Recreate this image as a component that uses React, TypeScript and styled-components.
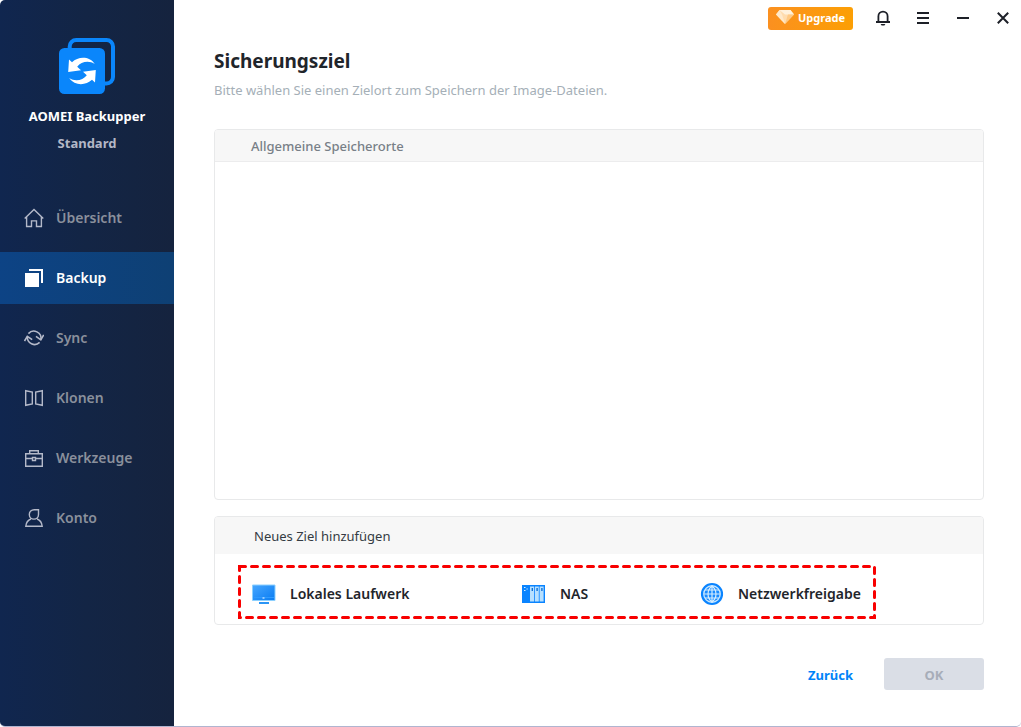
import React from 'react';
import styled, { createGlobalStyle } from 'styled-components';

const GlobalStyle = createGlobalStyle`
  *, *::before, *::after { box-sizing: border-box; }
  body {
    margin: 0;
    background: #ffffff;
    color: #1f252b;
    font-family: 'Noto Sans', 'Open Sans', sans-serif;
    font-size: 13px;
    line-height: 20px;
  }
  button {
    margin: 0;
    padding: 0;
    border: 0;
    background: none;
    color: inherit;
    font: inherit;
    cursor: pointer;
  }
  h1, h2, p, ul { margin: 0; padding: 0; }
  svg { display: block; flex: none; }
`;

const Window = styled.div`
  display: grid;
  grid-template-columns: 174px minmax(0, 1fr);
  min-height: 100vh;
  overflow: hidden;
  border-bottom: 1px solid #b0b5d0;
  border-radius: 5px;
`;

const Sidebar = styled.aside`
  display: flex;
  flex-direction: column;
  background: linear-gradient(90deg, #10264f, #132545 50%, #15233e);
`;

const Brand = styled.div`
  display: flex;
  flex-direction: column;
  align-items: center;
  padding-top: 38px;
`;

const ProductName = styled.strong`
  margin-top: 12px;
  color: #ffffff;
  font-weight: 700;
`;

const Edition = styled.span`
  margin-top: 7px;
  color: #b3b7c6;
  font-weight: 700;
`;

const NavList = styled.ul`
  display: flex;
  flex-direction: column;
  gap: 8px;
  margin-top: 39px;
  list-style: none;
`;

const NavLink = styled.a<{ $active?: boolean }>`
  display: flex;
  align-items: center;
  gap: 12px;
  height: 52px;
  padding-left: 24px;
  background: ${(p) => (p.$active ? 'linear-gradient(90deg, #0d4385, #0e4074)' : 'transparent')};
  color: ${(p) => (p.$active ? '#ffffff' : '#8a909c')};
  font-size: 14px;
  font-weight: 600;
  text-decoration: none;

  svg { color: ${(p) => (p.$active ? '#ffffff' : '#b4b9c9')}; }
`;

const Main = styled.main`
  display: flex;
  flex-direction: column;
`;

const TitleBar = styled.header`
  display: flex;
  align-items: center;
  justify-content: flex-end;
  gap: 16px;
  height: 36px;
  padding-right: 6px;
`;

const UpgradeButton = styled.button`
  display: flex;
  align-items: center;
  gap: 4px;
  height: 23px;
  margin-right: 2px;
  padding: 0 8px;
  border-radius: 3px;
  background: linear-gradient(90deg, #fb9020, #fc9f04);
  color: #ffffff;
  font-size: 11px;
  font-weight: 700;
`;

const WindowButton = styled.button`
  display: flex;
  align-items: center;
  justify-content: center;
  width: 24px;
  height: 24px;
  color: #1d2028;
`;

const Content = styled.div`
  display: flex;
  flex: 1;
  flex-direction: column;
  padding: 12px 37px 36px 40px;
`;

const Title = styled.h1`
  font-size: 19px;
  font-weight: 700;
  line-height: 26px;
`;

const Subtitle = styled.p`
  margin-top: 6px;
  color: #a5afb7;
`;

const Panel = styled.section<{ $grow?: boolean }>`
  flex: ${(p) => (p.$grow ? '1' : 'none')};
  border: 1px solid #e8e9ea;
  border-radius: 4px;
  overflow: hidden;
`;

const LocationsPanel = styled(Panel)`
  margin-top: 29px;
`;

const TargetPanel = styled(Panel)`
  margin-top: 16px;
`;

const LocationsHeading = styled.h2`
  padding: 6px 36px 5px;
  border-bottom: 1px solid #ececed;
  background: #f7f7f7;
  color: #788087;
  font-size: 13px;
  font-weight: 500;
`;

const TargetHeading = styled.h2`
  padding: 9px 39px 8px;
  background: #f7f7f7;
  color: #343b43;
  font-size: 13px;
  font-weight: 400;
`;

const Highlight = styled.div`
  position: relative;
  display: grid;
  grid-template-columns: 270px 178px 162px;
  align-items: center;
  width: fit-content;
  height: 54px;
  margin: 11px 23px 5px;
  padding: 3px 14px 0;
`;

const HighlightOutline = styled.svg`
  position: absolute;
  inset: 0;
  width: 100%;
  height: 100%;
  overflow: visible;
  pointer-events: none;
`;

const TargetButton = styled.button`
  display: flex;
  align-items: center;
  gap: 14px;
  color: #1f252b;
  font-size: 14px;
  font-weight: 600;
  white-space: nowrap;
`;

const Footer = styled.footer`
  display: flex;
  align-items: center;
  justify-content: flex-end;
  gap: 31px;
  margin-top: 33px;
`;

const FooterButton = styled.button`
  height: 32px;
  padding-top: 2px;
  font-weight: 700;
`;

const BackButton = styled(FooterButton)`
  color: #0083f8;
`;

const OkButton = styled(FooterButton)`
  width: 100px;
  border-radius: 3px;
  background: #dadee6;
  color: #a7adb9;
`;

const arrow =
  'M10 21.5 L13 24.2 C19 18.600 30 17.600 35.800 26 C30 22.200 22 23.600 18.200 28.800 L22 32.300 L9.200 34 Z';

const Logo = () => (
  <svg width="56" height="56" viewBox="0 0 56 56" aria-hidden="true">
    <path
      d="M10.7 12V8.5a6.5 6.5 0 0 1 6.5-6.5H47.5a6.5 6.5 0 0 1 6.5 6.5V39a6.5 6.5 0 0 1-6.5 6.5H44"
      fill="none"
      stroke="#0a86fb"
      strokeWidth="4"
    />
    <rect y="10" width="46" height="46" rx="5.5" fill="#0a86fb" />
    <path d={arrow} fill="#ffffff" />
    <path d={arrow} fill="#ffffff" transform="rotate(180 23 33)" />
  </svg>
);

const NavIcon = ({ children }: { children: React.ReactNode }) => (
  <svg width="20" height="20" viewBox="0 0 20 20" fill="none" stroke="currentColor" strokeWidth="1.4" aria-hidden="true">
    {children}
  </svg>
);

const HomeIcon = () => (
  <NavIcon>
    <path d="M.7 10.4 10 1.5l9.3 8.9M2.6 8.8v9.7h4.9v-5.6h5v5.6h4.9V8.8" />
  </NavIcon>
);

const BackupIcon = () => (
  <NavIcon>
    <path d="M1 5h14v14H1z" fill="currentColor" stroke="none" />
    <path d="M5 2h13v13" strokeWidth="2" />
  </NavIcon>
);

const SyncIcon = () => (
  <NavIcon>
    <path d="M4.400 5.600A7.200 7.200 0 0 1 16.900 11.600M15.600 14.400A7.200 7.200 0 0 1 3.400 8.600" strokeWidth="1.600" />
    <path d="m12 8.400 4.800 3.500 2.900-5M8.200 11.700 3.300 8.300.5 13" strokeWidth="1.600" />
  </NavIcon>
);

const CloneIcon = () => (
  <NavIcon>
    <path d="M1.7 2.7 8.3 4v12l-6.6 1.3zM18.3 2.7 11.7 4v12l6.6 1.3z" />
  </NavIcon>
);

const ToolsIcon = () => (
  <NavIcon>
    <path d="M1.7 5.7h16.6v12.6H1.7zM5.7 5.5V2.7h8.6v2.8M1.7 10.5h6.6M11.7 10.5h6.6M8.5 9.5h3v3h-3z" />
  </NavIcon>
);

const AccountIcon = () => (
  <NavIcon>
    <path d="M14.5 1.7H10.2C7.4 1.7 5.3 3.7 5.3 6.4s2 4.7 4.6 4.7 4.6-2 4.6-4.7zM6.9 11C4 12 2.200 14.500 1.800 18.300h16.400c-.4-3.800-2.200-6.300-5.100-7.300" />
  </NavIcon>
);

const DiamondIcon = () => (
  <svg width="18" height="16" viewBox="0 0 18 16" aria-hidden="true">
    <path d="M3.500 0h11L18 4.500 9 14 0 4.500z" fill="#ffdcae" />
    <path d="M3.500 0h11L18 4.500H9z" fill="#fff1dc" />
    <path d="M0 4.500 3.500 0 6 4.500 9 14z" fill="#ffe9ca" />
    <path d="M12 4.500h6L9 14z" fill="#ffc984" />
  </svg>
);

const BellIcon = () => (
  <svg width="14" height="16" viewBox="0 0 14 16" fill="none" stroke="currentColor" strokeWidth="1.8" aria-hidden="true">
    <path d="M2.400 12V6.200a4.600 4.600 0 0 1 9.200 0V12M0 12h14" />
    <path d="M4.600 14h4.800l-1 1.600H5.600z" fill="currentColor" stroke="none" />
  </svg>
);

const MenuIcon = () => (
  <svg width="12" height="12" viewBox="0 0 12 12" fill="currentColor" aria-hidden="true">
    <path d="M0 0h12v2H0zM0 5h12v2H0zM0 10h12v2H0z" />
  </svg>
);

const MinimizeIcon = () => (
  <svg width="12" height="12" viewBox="0 0 12 12" fill="currentColor" aria-hidden="true">
    <path d="M0 5h12v2H0z" />
  </svg>
);

const CloseIcon = () => (
  <svg width="12" height="12" viewBox="0 0 12 12" stroke="currentColor" strokeWidth="2" aria-hidden="true">
    <path d="m.8.8 10.400 10.400M11.200.8.8 11.200" />
  </svg>
);

const MonitorIcon = () => (
  <svg width="24" height="20" viewBox="0 0 24 20" aria-hidden="true">
    <defs>
      <linearGradient id="screen" x1="0" y1="0" x2="1" y2="1">
        <stop offset="0" stopColor="#47a7ff" />
        <stop offset="1" stopColor="#087bf2" />
      </linearGradient>
    </defs>
    <path d="M.5 1h22.500v15.500H.5z" fill="url(#screen)" stroke="#8cd0ff" />
    <path d="M2 13.500h20" stroke="#2e9bff" />
    <path d="M10.500 14h2" stroke="#ffffff" />
    <path d="M7 18h10v2H7z" fill="#2b95f5" />
  </svg>
);

const NasIcon = () => (
  <svg width="24" height="20" viewBox="0 0 24 20" aria-hidden="true">
    <path d="M0 1h23v18H0z" fill="#0a84ff" />
    <path d="M8 2.500h4v15H8zM12.800 2.500h4v15h-4zM17.600 2.500h4v15h-4z" fill="#b7e0ff" />
    <path d="M10.300 4v3M15.100 4v3M19.900 4v3" stroke="#0a70d8" strokeWidth="1.400" />
    <path d="M2 3.500h1.500M2 6.500h1.500M4.500 5h1.200" stroke="#d8efff" strokeWidth="1.200" />
  </svg>
);

const GlobeIcon = () => (
  <svg width="24" height="24" viewBox="0 0 24 24" fill="none" aria-hidden="true">
    <circle cx="12" cy="12" r="10" fill="#c9e8ff" stroke="#0a84ff" strokeWidth="2.200" />
    <circle cx="12" cy="12" r="7.600" fill="#1b8cff" />
    <path
      d="M12 3.500v17M4 12h16M5 8h14M5 16h14M12 4C6.700 8 6.700 16 12 20M12 4c5.300 4 5.300 12 0 16"
      stroke="#d6eeff"
      strokeWidth="1.200"
    />
  </svg>
);

const navItems = [
  { label: 'Übersicht', icon: <HomeIcon /> },
  { label: 'Backup', icon: <BackupIcon />, active: true },
  { label: 'Sync', icon: <SyncIcon /> },
  { label: 'Klonen', icon: <CloneIcon /> },
  { label: 'Werkzeuge', icon: <ToolsIcon /> },
  { label: 'Konto', icon: <AccountIcon /> },
];

const targets = [
  { label: 'Lokales Laufwerk', icon: <MonitorIcon /> },
  { label: 'NAS', icon: <NasIcon /> },
  { label: 'Netzwerkfreigabe', icon: <GlobeIcon /> },
];

export default function App() {
  return (
    <>
      <GlobalStyle />
      <Window>
        <Sidebar>
          <Brand>
            <Logo />
            <ProductName>AOMEI Backupper</ProductName>
            <Edition>Standard</Edition>
          </Brand>
          <nav>
            <NavList>
              {navItems.map((item) => (
                <li key={item.label}>
                  <NavLink href="#" $active={item.active} aria-current={item.active ? 'page' : undefined}>
                    {item.icon}
                    {item.label}
                  </NavLink>
                </li>
              ))}
            </NavList>
          </nav>
        </Sidebar>
        <Main>
          <TitleBar>
            <UpgradeButton type="button">
              <DiamondIcon />
              Upgrade
            </UpgradeButton>
            <WindowButton type="button" aria-label="Benachrichtigungen"><BellIcon /></WindowButton>
            <WindowButton type="button" aria-label="Menü"><MenuIcon /></WindowButton>
            <WindowButton type="button" aria-label="Minimieren"><MinimizeIcon /></WindowButton>
            <WindowButton type="button" aria-label="Schließen"><CloseIcon /></WindowButton>
          </TitleBar>
          <Content>
            <Title>Sicherungsziel</Title>
            <Subtitle>Bitte wählen Sie einen Zielort zum Speichern der Image-Dateien.</Subtitle>
            <LocationsPanel $grow>
              <LocationsHeading>Allgemeine Speicherorte</LocationsHeading>
            </LocationsPanel>
            <TargetPanel>
              <TargetHeading>Neues Ziel hinzufügen</TargetHeading>
              <Highlight>
                {targets.map((target) => (
                  <TargetButton key={target.label} type="button">
                    {target.icon}
                    {target.label}
                  </TargetButton>
                ))}
                <HighlightOutline viewBox="0 0 638 54" aria-hidden="true">
                  <rect
                    x="1.5"
                    y="1.5"
                    width="635"
                    height="51"
                    fill="none"
                    stroke="#f80000"
                    strokeWidth="3"
                    strokeLinecap="round"
                    strokeDasharray="6 6"
                  />
                </HighlightOutline>
              </Highlight>
            </TargetPanel>
            <Footer>
              <BackButton type="button">Zurück</BackButton>
              <OkButton type="button" disabled>OK</OkButton>
            </Footer>
          </Content>
        </Main>
      </Window>
    </>
  );
}
